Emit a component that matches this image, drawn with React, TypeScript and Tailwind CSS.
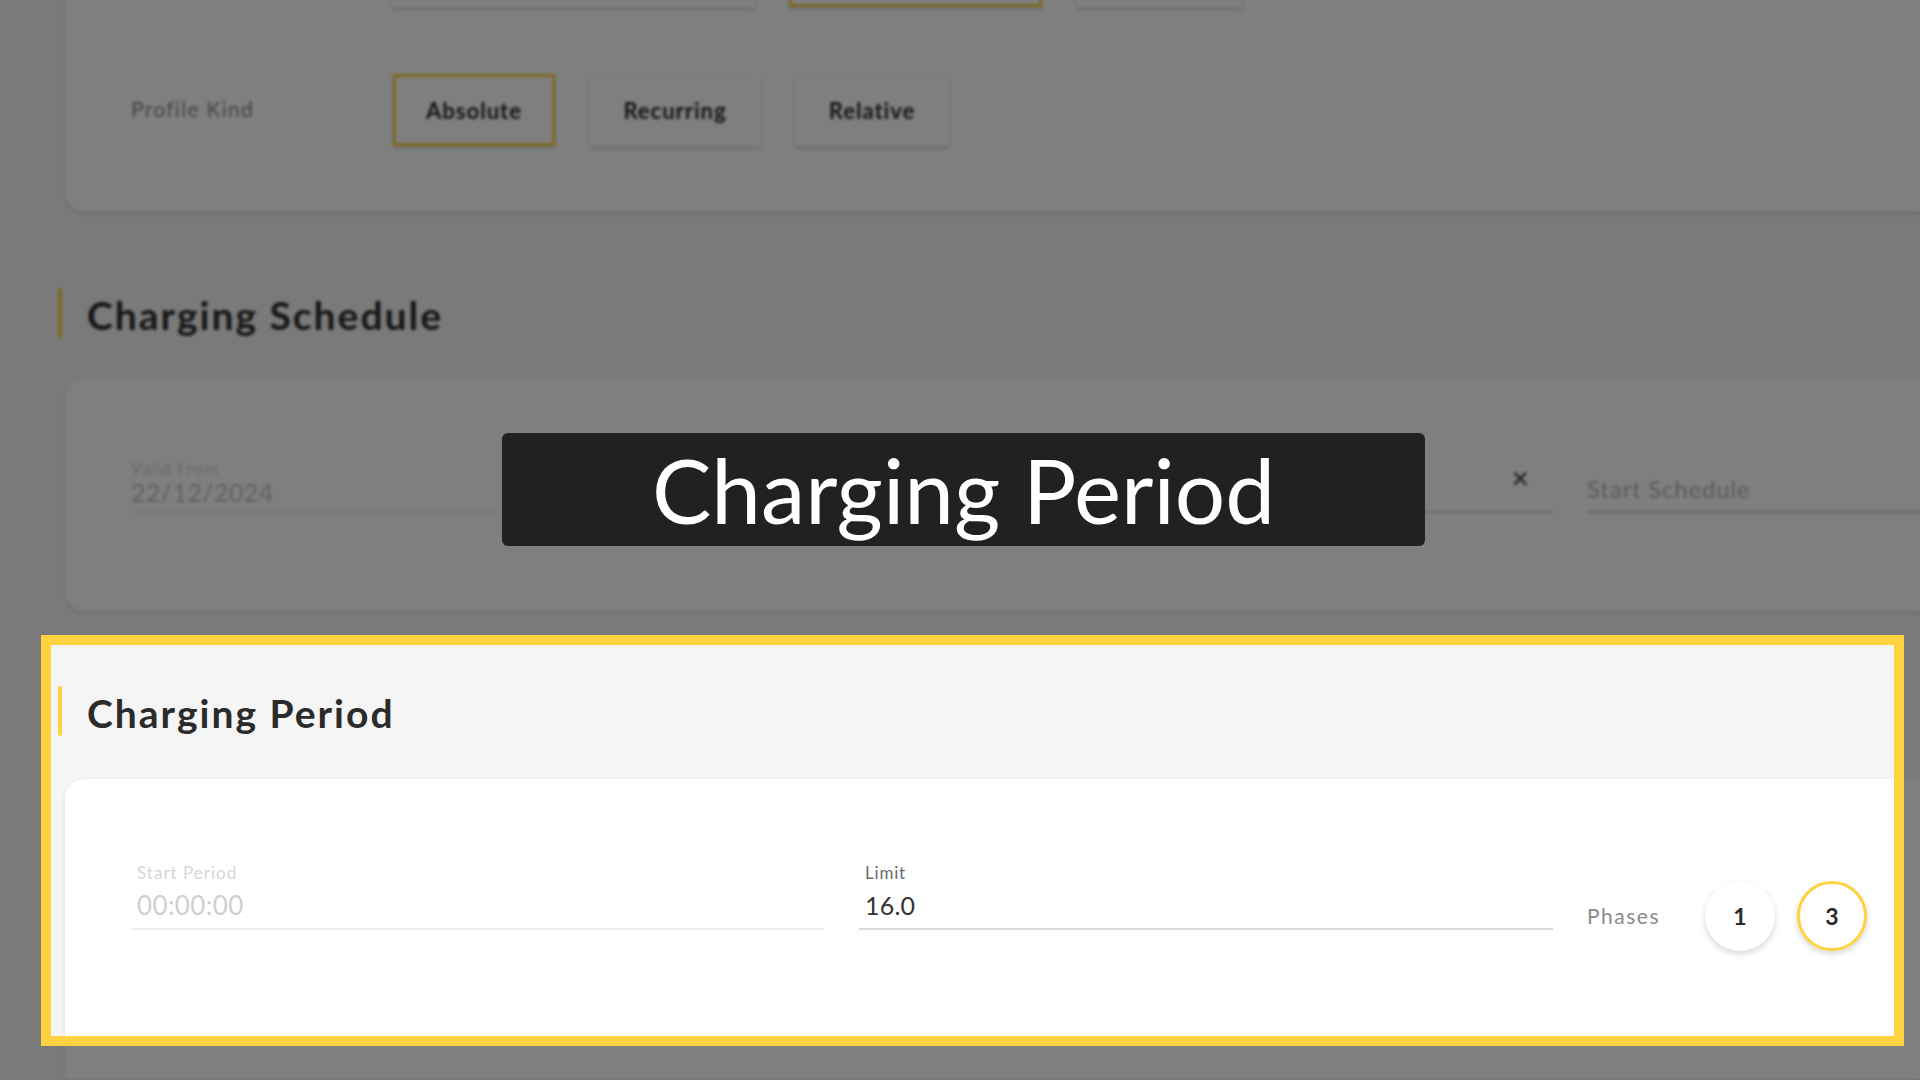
import React from "react";

function Field({
  label,
  value,
  labelColor,
  valueColor,
  line,
  pad,
  children,
}: {
  label: string;
  value: string;
  labelColor: string;
  valueColor: string;
  line: string;
  pad: string;
  children?: React.ReactNode;
}) {
  return (
    <div className={`relative border-b-2 ${line}`}>
      <div className={`${pad} text-[17px] leading-[20px] tracking-[0.9px] ${labelColor}`}>{label}</div>
      <div className={`${pad} text-[25px] leading-[26px] pb-[6px] tracking-[0.4px] ${valueColor}`}>{value}</div>
      {children}
    </div>
  );
}

const btn =
  "flex h-[72px] items-center justify-center bg-white text-[22px] font-bold tracking-[1px] text-[#2b2b2b] shadow-[0_2px_4px_rgba(0,0,0,0.18)]";

export default function App() {
  return (
    <div className="relative h-[1080px] w-[1920px] overflow-hidden bg-[#f5f5f5] font-['Lato',sans-serif]">
      <div className="flex h-full">
        <div className="w-[12px] shrink-0 border-r border-[#efefef] bg-[#f7f7f7]" />
        <main className="flex-1 pl-[46px]">
          {/* Top card */}
          <div className="-mt-[98px] ml-[7px] w-[2300px] rounded-[20px] bg-white pb-[66px] pl-[66px] pt-[33px] shadow-[0_2px_4px_rgba(0,0,0,0.14)]">
            <div className="flex items-center">
              <div className="w-[262px] text-[21px] tracking-[1.3px] text-[#8a8a8a]">Profile Purpose</div>
              <div className="flex gap-[34px]">
                <div className={`${btn} w-[362px]`}>TxDefaultProfile</div>
                <div className={`${btn} w-[253px] border-[3px] border-[#ffd23f]`}>TxProfile</div>
                <div className={`${btn} w-[166px]`}>Max</div>
              </div>
            </div>
            <div className="mt-[67px] flex items-center">
              <div className="w-[262px] pb-[3px] text-[21px] tracking-[1.3px] text-[#8a8a8a]">Profile Kind</div>
              <div className="flex gap-[34px]">
                <div className={`${btn} w-[162px] border-[3px] border-[#ffd23f]`}>Absolute</div>
                <div className={`${btn} w-[172px]`}>Recurring</div>
                <div className={`${btn} w-[154px]`}>Relative</div>
              </div>
            </div>
          </div>

          {/* Charging Schedule */}
          <div className="mt-[76px] flex h-[50px] items-center">
            <div className="h-[50px] w-[4px] rounded-full bg-[#ffd23f]" />
            <h2 className="ml-[25px] mt-[5px] text-[39px] font-bold tracking-[2px] text-[#2b2b2b]">Charging Schedule</h2>
          </div>
          <div className="ml-[7px] mt-[41px] h-[232px] w-[2300px] rounded-[20px] bg-white pl-[66px] pt-[80px] shadow-[0_2px_4px_rgba(0,0,0,0.12)]">
            <div className="grid grid-cols-[694px_694px_694px] gap-x-[34px]">
              <Field label="Valid From" value="22/12/2024" labelColor="text-[#d6d6d6]" valueColor="text-[#c4c4c4]" line="border-[#eeeeee]" pad="pl-0" />
              <Field label="Valid To" value="31/12/2024" labelColor="text-[#9a9a9a]" valueColor="text-[#333333]" line="border-[#d6d6d6]" pad="pl-0">
                <span className="absolute right-[24px] top-[4px] text-[30px] leading-[28px] text-[#333333]">×</span>
              </Field>
              <div className="border-b-2 border-[#d0d0d0] pb-[8px] pt-[17px] text-[24px] leading-[26px] tracking-[0.8px] text-[#b4b4b4]">Start Schedule</div>
            </div>
          </div>

          {/* Charging Period */}
          <div className="mt-[75px] flex h-[50px] items-center">
            <div className="h-[50px] w-[4px] rounded-full bg-[#ffd23f]" />
            <h2 className="ml-[25px] mt-[5px] text-[39px] font-bold tracking-[2px] text-[#2b2b2b]">Charging Period</h2>
          </div>
          <div className="ml-[7px] mt-[43px] h-[300px] w-[2300px] rounded-t-[20px] bg-white pl-[66px] pt-[84px] shadow-[0_2px_4px_rgba(0,0,0,0.12)]">
            <div className="grid grid-cols-[694px_694px_694px] items-start gap-x-[34px]">
              <div className="border-b-2 border-[#f0f0f0]">
                <div className="pl-[6px] text-[17px] leading-[20px] tracking-[1px] text-[#d6d6d6]">Start Period</div>
                <div className="mt-[6px] pb-[7px] pl-[6px] text-[26px] leading-[32px] tracking-[0.4px] text-[#cfcfcf]">00:00:00</div>
              </div>
              <div className="border-b-2 border-[#d9d9d9]">
                <div className="pl-[6px] text-[17px] leading-[20px] tracking-[0.8px] text-[#6b6b6b]">Limit</div>
                <div className="mt-[6px] pb-[7px] pl-[6px] text-[25px] leading-[32px] tracking-[0.2px] text-[#333333]">16.0</div>
              </div>
              <div className="flex items-center pt-[18px]">
                <span className="w-[118px] text-[21px] tracking-[1.5px] text-[#8a8a8a]">Phases</span>
                <div className="flex gap-[22px]">
                  <div className="flex h-[70px] w-[70px] items-center justify-center rounded-full bg-white text-[23px] font-bold text-[#2b2b2b] shadow-[0_3px_6px_rgba(0,0,0,0.16)]">1</div>
                  <div className="flex h-[70px] w-[70px] items-center justify-center rounded-full border-[3px] border-[#ffd23f] bg-white text-[23px] font-bold text-[#2b2b2b] shadow-[0_3px_6px_rgba(0,0,0,0.16)]">3</div>
                </div>
              </div>
            </div>
          </div>
        </main>
      </div>

      {/* Dim overlay around the highlight */}
      <div className="absolute left-0 top-0 h-[635px] w-[1920px] bg-black/50 backdrop-blur-[1.5px]" />
      <div className="absolute left-0 top-[1046px] h-[34px] w-[1920px] bg-black/50 backdrop-blur-[1.5px]" />
      <div className="absolute left-0 top-[635px] h-[411px] w-[41px] bg-black/50 backdrop-blur-[1.5px]" />
      <div className="absolute left-[1904px] top-[635px] h-[411px] w-[16px] bg-black/50 backdrop-blur-[1.5px]" />

      {/* Highlight frame */}
      <div className="absolute left-[41px] top-[635px] h-[411px] w-[1863px] border-[10px] border-[#ffd23f]" />

      {/* Caption */}
      <div className="absolute left-[502px] top-[433px] flex h-[113px] w-[923px] items-center justify-center rounded-[6px] bg-[#212121]">
        <span className="font-['Lato',sans-serif] text-[89px] leading-none text-white">Charging Period</span>
      </div>
    </div>
  );
}
